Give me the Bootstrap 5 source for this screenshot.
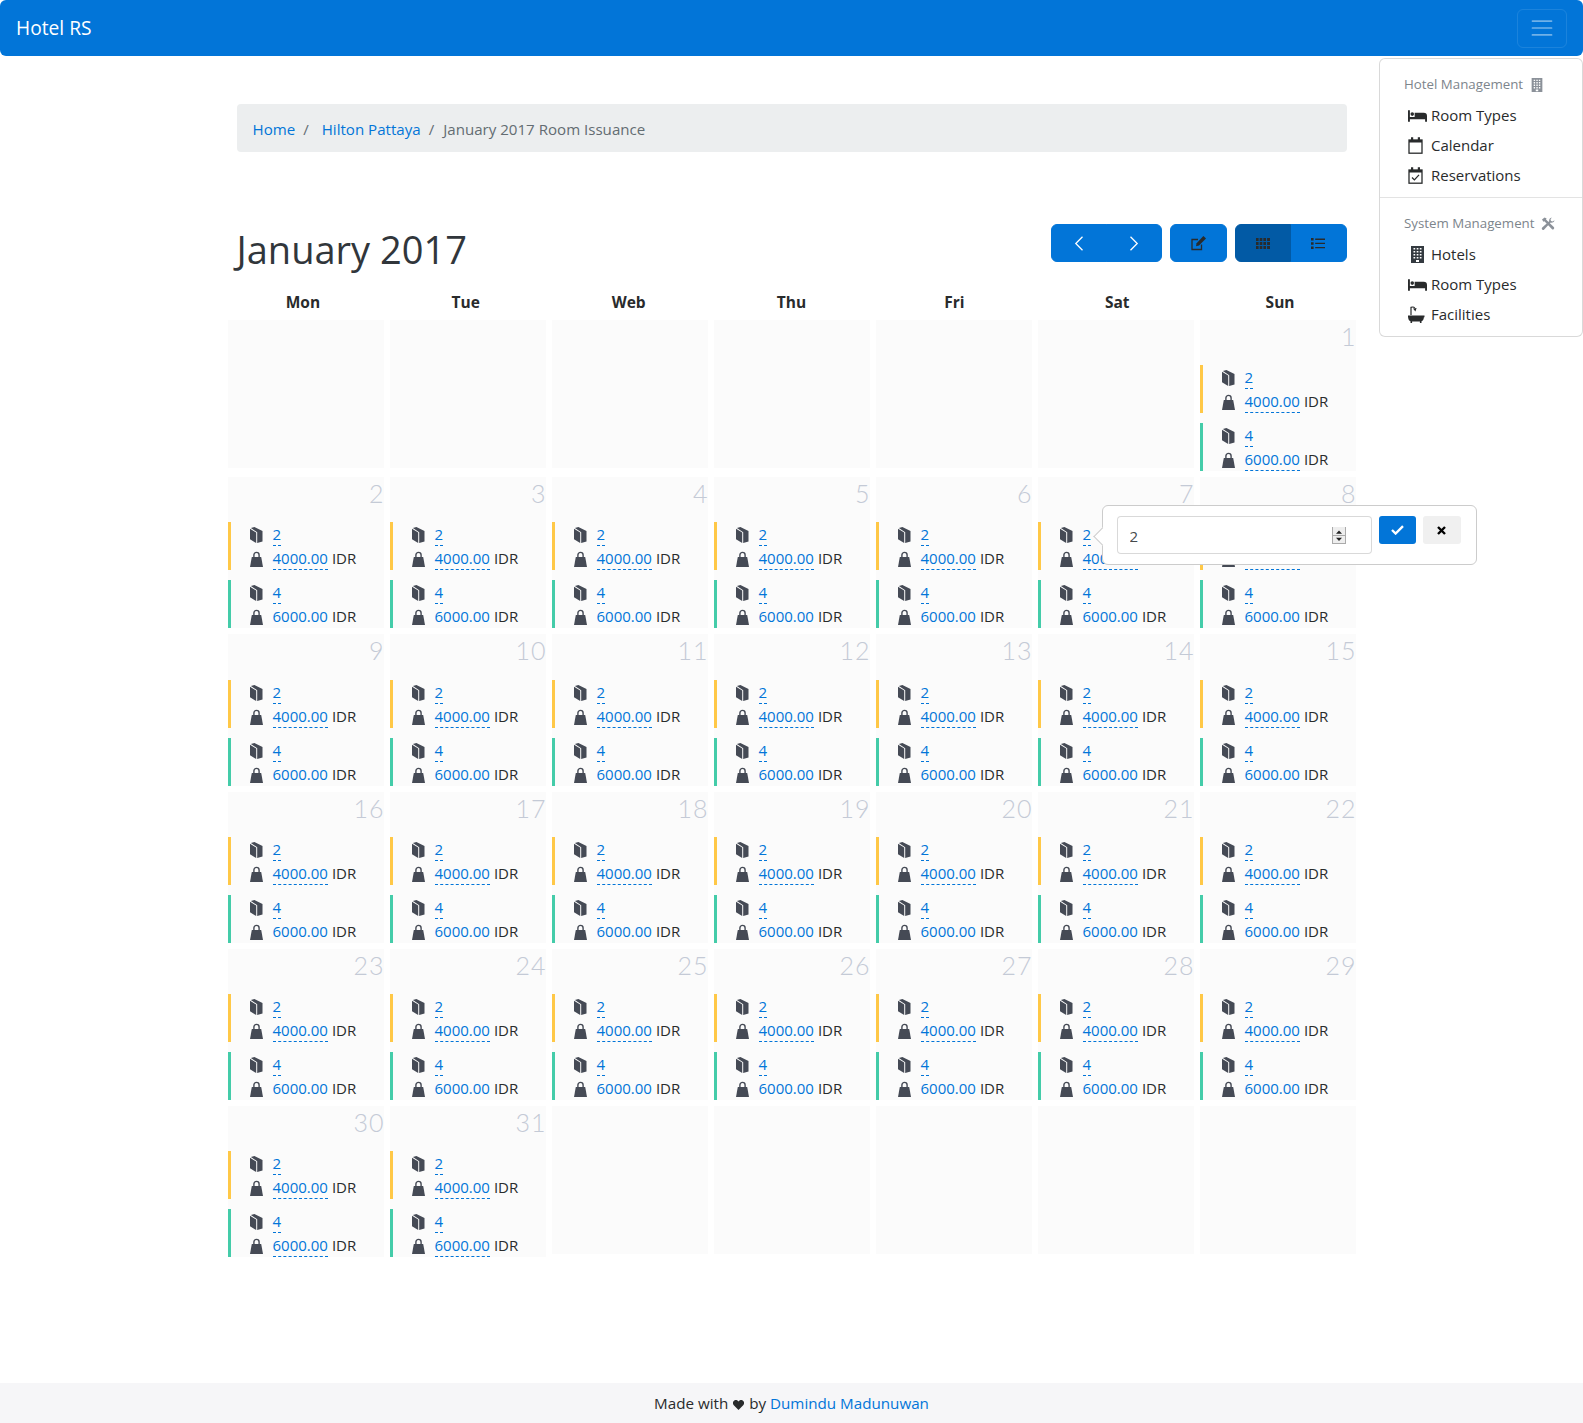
<!DOCTYPE html>
<html lang="en">
<head>
    <meta charset="UTF-8">
    <meta name="viewport" content="width=device-width, initial-scale=1.0">
    <title>Hotel RS</title>
    <link rel="stylesheet" href="https://cdn.jsdelivr.net/npm/bootstrap@5.3.0/dist/css/bootstrap.min.css">
    <style>
        body { font-family: "Open Sans", "Noto Sans", sans-serif; font-size: 15px; color: #292b2c; }
        a { color: #0275d8; text-decoration: none; }
        .top-bar { background: #0275d8; height: 56px; padding: 0 16px; }
        .top-bar .navbar-brand { font-size: 19.2px; margin: 0; padding: 0; color: #fff; }
        .top-bar .navbar-toggler { padding: 0 11px; border-color: rgba(255,255,255,.1); height: 39px; display: flex; align-items: center; }
        .top-bar .navbar-toggler:focus { box-shadow: none; }
        .top-bar .navbar-toggler-icon { width: 26px; height: 26px; opacity: .8; }
        .side-menu { left: auto; right: 0; top: 58px; width: 204px; padding: 8px 0 7px; font-size: 15px; --bs-dropdown-border-color: rgba(0,0,0,.15); }
        .side-menu .dropdown-header { height: 33px; padding: 2px 24px 0; font-size: 13.3px; color: #7d858c; display: flex; align-items: center; gap: 8px; }
        .side-menu .dropdown-header .tools-ico { margin-left: -2px; }
        .side-menu .dropdown-item { height: 30px; padding: 0 0 0 28px; display: flex; align-items: center; color: #292b2c; }
        .side-menu .dropdown-item svg { width: 19px; margin-right: 4px; flex: none; }
        .side-menu .dropdown-divider { margin: 7px 0 8px; border-color: #e3e3e3; opacity: 1; }
        .page-wrap { max-width: 1140px; padding: 0 15px; }
        .crumbs { background: #eceeef; height: 48px; margin: 48px 0 72px; padding: 3px 16px 0; border-radius: 4px; align-items: center; font-size: 15.1px; }
        .crumbs .breadcrumb-item + .breadcrumb-item { padding-left: 8px; }
        .crumbs .breadcrumb-item + .breadcrumb-item::before { color: #636c72; padding-right: 9px; }
        .crumbs .gap-before::before { padding-right: 13px !important; }
        .crumbs .active { color: #636c72; }
        .title-row { height: 38px; margin-bottom: 28px; }
        .title-row h1 { font-size: 38px; font-weight: 400; margin: 0; line-height: 50px; color: #31363b; }
        .title-row .btn-primary { --bs-btn-bg: #0275d8; --bs-btn-border-color: #0275d8; --bs-btn-active-bg: #025aa5; --bs-btn-active-border-color: #025aa5; --bs-btn-hover-bg: #0275d8; --bs-btn-hover-border-color: #0275d8; height: 38px; width: 56px; padding: 0; display: flex; align-items: center; justify-content: center; }
        .title-row .btn-edit { width: 57px; }
        .title-row .view-group .btn-primary { width: 56.5px; }
        .week-head { display: grid; grid-template-columns: repeat(7, 1fr); margin: 0 -15px 6px; height: 24px; font-size: 15.5px; font-weight: 700; line-height: 24px; text-align: center; }
        .cal-grid { display: grid; grid-template-columns: repeat(7, 1fr); grid-auto-rows: 151.2px; gap: 6px; margin: 0 -9px; }
        .day-box { background: #fbfbfb; position: relative; }
        .day-box.is-empty { height: 148px; }
        .day-no { height: 45.2px; padding: 3px 0 0 0; margin-right: -1px; text-align: right; font-family: Lato, sans-serif; font-weight: 300; font-size: 25px; line-height: 26px; letter-spacing: 1px; color: #c4cad6; }
        .slot { border-left: 3px solid #ffc847; height: 48px; margin-bottom: 10px; padding-left: 19px; }
        .slot.slot-alt { border-left-color: #44cca9; margin-bottom: 0; }
        .slot-line { display: flex; height: 24px; line-height: 25px; }
        .slot-line svg { flex: none; width: 13px; height: 16px; margin: 5px 10px 0 0; }
        .edit-link { display: inline-block; height: 24px; border-bottom: 1px dashed #0275d8; }
        .slot-line span.unit { margin-left: 4px; }
        .mid-week .slot-alt .slot-line:last-child .edit-link { border-bottom-color: transparent; }
        .qty-pop { position: absolute; left: 64px; top: 28px; width: 375px; height: 60px; background: #fff; border: 1px solid #ccc; border-radius: 6px; padding: 10px 14px; gap: 7px; z-index: 5; }
        .qty-pop::before { content: ""; position: absolute; left: -7px; top: 24px; width: 13px; height: 13px; background: #fff; border-left: 1px solid #ccc; border-bottom: 1px solid #ccc; transform: rotate(45deg); }
        .qty-field { position: relative; width: 255px; flex: none; }
        .qty-field .form-control { height: 38px; padding: 1px 12px 0; font-size: 15px; color: #464a4c; border-color: rgba(0,0,0,.15); border-radius: 4px; }
        .qty-field input::-webkit-inner-spin-button { -webkit-appearance: none; margin: 0; }
        .qty-field svg { position: absolute; right: 26px; top: 11px; }
        .qty-pop .btn { width: 37.5px; height: 28px; padding: 0; display: flex; align-items: center; justify-content: center; border: 0; border-radius: 3px; }
        .qty-ok { background: #0275d8; }
        .qty-no { background: #f0f0f0; }
        .foot-bar { background: #f6f6f8; height: 40px; line-height: 40px; text-align: center; font-size: 15.2px; }
        .foot-bar svg { margin: 0 1px; }
    </style>
</head>
<body class="d-flex flex-column min-vh-100">

    <svg width="0" height="0" class="position-absolute">
        <symbol id="i-book" viewBox="0 0 13 16"><path fill="#454a55" d="M0 1.8l6.2 3.8V16L0 12.2zM.9 1L4.4 0l8.1 3.9v10.6L7.2 16V5.2z"/></symbol>
        <symbol id="i-bag" viewBox="0 0 13 16"><path fill="#454a55" d="M1.8 6h9.4L13 16H0z"/><path fill="none" stroke="#454a55" stroke-width="1.4" d="M3.9 7V4a2.6 2.6 0 0 1 5.2 0v3"/></symbol>
        <symbol id="i-bed" viewBox="0 0 20 13"><path fill="#292b2c" d="M0 1h2v7h5V3.5h9.5A3.5 3.5 0 0 1 20 7v6h-2v-2.5H2V13H0z"/><circle cx="4.5" cy="5" r="1.9" fill="#292b2c"/></symbol>
        <symbol id="i-cal" viewBox="2 0 19 17"><rect x="3" y="3" width="13" height="13.2" fill="none" stroke="#292b2c" stroke-width="1.3"/><path fill="#292b2c" d="M3 3h13v2.4H3zM5 .3h2.2v3.4H5zM11.8.3H14v3.4h-2.2z"/></symbol>
        <symbol id="i-cal-ok" viewBox="2 0 19 17"><rect x="3" y="3" width="13" height="13.2" fill="none" stroke="#292b2c" stroke-width="1.3"/><path fill="#292b2c" d="M3 3h13v2.4H3zM5 .3h2.2v3.4H5zM11.8.3H14v3.4h-2.2z"/><path fill="none" stroke="#292b2c" stroke-width="1.3" d="M6 10.5l2.4 2.4 4.6-5"/></symbol>
        <symbol id="i-tower" viewBox="0 0 13 17"><path fill="currentColor" fill-rule="evenodd" d="M0 0h13v17H0zM2.5 2v1.6h1.7V2zm3.2 0v1.6h1.7V2zm3.1 0v1.6h1.7V2zM2.5 5v1.6h1.7V5zm3.2 0v1.6h1.7V5zm3.1 0v1.6h1.7V5zM2.5 8v1.6h1.7V8zm3.2 0v1.6h1.7V8zm3.1 0v1.6h1.7V8zM2.5 11v1.6h1.7V11zm3.2 0v1.6h1.7V11zm3.1 0v1.6h1.7V11zM5 14v2h3v-2z"/></symbol>
        <symbol id="i-tools" viewBox="0 0 14 14"><path fill="#8b9199" d="M1 2.4L3.6.4 5.6 1.6 5 2.6l7.8 7.4a1.4 1.4 0 0 1-2 2L3.4 4.2l-1 .6z"/><path fill="#8b9199" d="M13.5 3.2A3 3 0 0 1 9.7 5.6L3.2 12.6a1.4 1.4 0 0 1-2-2l7-6.3A3 3 0 0 1 10.8.6L9.5 2.4l.5 1.6 1.6.4z"/></symbol>
        <symbol id="i-bath" viewBox="1.5 0 19 17"><path fill="#292b2c" d="M1 9.4h17v1.8h-.6c-.2 2.2-1 3.5-2.4 4V17h-1.6v-1.4H5.6V17H4v-1.8c-1.4-.5-2.2-1.8-2.4-4H1z"/><path fill="none" stroke="#292b2c" stroke-width="1.2" d="M4.5 9V1.4c1.4-.6 3-.4 3.8.6"/><path fill="#292b2c" d="M6.5 2.6l3.6-.6-1.2 3.4z"/></symbol>
    </svg>

    <nav class="navbar navbar-dark top-bar rounded">
        <a class="navbar-brand" href="#">Hotel RS</a>
        <button class="navbar-toggler" type="button" aria-label="Toggle navigation"><span class="navbar-toggler-icon"></span></button>
        <div class="dropdown-menu show side-menu">
            <div class="dropdown-header">Hotel Management <svg width="12" height="14" color="#8b9199"><use href="#i-tower"/></svg></div>
            <a class="dropdown-item" href="#"><svg height="13"><use href="#i-bed"/></svg>Room Types</a>
            <a class="dropdown-item" href="#"><svg height="17"><use href="#i-cal"/></svg>Calendar</a>
            <a class="dropdown-item" href="#"><svg height="17"><use href="#i-cal-ok"/></svg>Reservations</a>
            <div class="dropdown-divider"></div>
            <div class="dropdown-header">System Management <svg width="14" height="14" class="tools-ico"><use href="#i-tools"/></svg></div>
            <a class="dropdown-item" href="#"><svg height="17" color="#343a40"><use href="#i-tower"/></svg>Hotels</a>
            <a class="dropdown-item" href="#"><svg height="13"><use href="#i-bed"/></svg>Room Types</a>
            <a class="dropdown-item" href="#"><svg height="17"><use href="#i-bath"/></svg>Facilities</a>
        </div>
    </nav>

    <main class="container page-wrap">
        <ol class="breadcrumb crumbs">
            <li class="breadcrumb-item"><a href="#">Home</a></li>
            <li class="breadcrumb-item gap-before"><a href="#">Hilton Pattaya</a></li>
            <li class="breadcrumb-item active">January 2017 Room Issuance</li>
        </ol>

        <div class="d-flex justify-content-between title-row">
            <h1>January 2017</h1>
            <div class="d-flex gap-2">
                <div class="btn-group">
                    <button class="btn btn-primary" aria-label="Previous"><svg width="10" height="15" viewBox="0 0 10 15"><path fill="none" stroke="#fff" stroke-width="1.3" d="M8.5 .8L1.8 7.5l6.7 6.7"/></svg></button>
                    <button class="btn btn-primary" aria-label="Next"><svg width="10" height="15" viewBox="0 0 10 15"><path fill="none" stroke="#fff" stroke-width="1.3" d="M1.5 .8l6.7 6.7-6.7 6.7"/></svg></button>
                </div>
                <button class="btn btn-primary btn-edit" aria-label="Edit"><svg width="15" height="15" viewBox="0 0 15 15"><path fill="none" stroke="#292b2c" stroke-width="1.3" d="M10.5 8.5v5H1v-10h6"/><path fill="#292b2c" d="M12.4 0L15 2.4 8 9.6l-3 .6.6-3z"/></svg></button>
                <div class="btn-group view-group">
                    <button class="btn btn-primary active" aria-label="Month view"><svg width="14" height="11" viewBox="0 0 14 11"><path fill="#292b2c" d="M0 0h2.6v3H0zM3.7 0h2.6v3H3.7zM7.4 0H10v3H7.4zM11.1 0H14v3h-2.9zM0 4h2.6v3H0zM3.7 4h2.6v3H3.7zM7.4 4H10v3H7.4zM11.1 4H14v3h-2.9zM0 8h2.6v3H0zM3.7 8h2.6v3H3.7zM7.4 8H10v3H7.4zM11.1 8H14v3h-2.9z"/></svg></button>
                    <button class="btn btn-primary" aria-label="List view"><svg width="14" height="11" viewBox="0 0 14 11"><path fill="#292b2c" d="M0 0h2.6v2.6H0zM0 4.2h2.6v2.6H0zM0 8.4h2.6V11H0zM4.2 .6H14v1.3H4.2zM4.2 4.8H14v1.3H4.2zM4.2 9H14v1.3H4.2z"/></svg></button>
                </div>
            </div>
        </div>

        <div class="week-head">
            <div>Mon</div><div>Tue</div><div>Web</div><div>Thu</div><div>Fri</div><div>Sat</div><div>Sun</div>
        </div>
        <div id="calGrid" class="cal-grid"></div>
    </main>

    <footer class="foot-bar mt-auto">Made with <svg width="11" height="10" viewBox="0 0 11 10"><path fill="#292b2c" d="M5.5 10L.8 5.2A2.9 2.9 0 0 1 5 1l.5.6L6 1a2.9 2.9 0 0 1 4.2 4.2z"/></svg> by <a href="#">Dumindu Madunuwan</a></footer>

<script src="https://cdn.jsdelivr.net/npm/bootstrap@5.3.0/dist/js/bootstrap.bundle.min.js"></script>
<script>
    document.addEventListener("DOMContentLoaded", function () {
        const grid = document.getElementById("calGrid");

        function slot(qty, price, alt) {
            return `<div class="slot ${alt ? "slot-alt" : ""}">
                <div class="slot-line"><svg><use href="#i-book"/></svg><a class="edit-link" href="#">${qty}</a></div>
                <div class="slot-line"><svg><use href="#i-bag"/></svg><a class="edit-link" href="#">${price}</a><span class="unit">IDR</span></div>
            </div>`;
        }

        const popover = `<div class="qty-pop d-flex">
            <div class="qty-field">
                <input type="number" class="form-control" value="2">
                <svg width="14" height="17" viewBox="0 0 14 17"><path fill="#eee" d="M0 0h14v17H0z"/><path fill="none" stroke="#aaa" d="M.5 0v17M13.5 0v17M0 8.5h14M0 16.5h14"/><path fill="#222" d="M7 3.5l3 3.2H4zM7 14l3-3.2H4z"/></svg>
            </div>
            <button class="btn qty-ok" aria-label="Save"><svg width="13" height="10" viewBox="0 0 13 10"><path fill="none" stroke="#fff" stroke-width="2.4" d="M1 5l3.6 3.5L12 1.2"/></svg></button>
            <button class="btn qty-no" aria-label="Cancel"><svg width="9" height="9" viewBox="0 0 9 9"><path fill="none" stroke="#000" stroke-width="2.4" d="M1 1l7 7M8 1L1 8"/></svg></button>
        </div>`;

        // Jan 2017 starts on a Sunday, so six empty boxes first
        let html = "";
        for (let i = 0; i < 6; i++) html += `<div class="day-box is-empty"></div>`;
        for (let d = 1; d <= 31; d++) {
            const mid = d >= 2 && d <= 29 ? "mid-week" : "";
            html += `<div class="day-box ${mid}"><div class="day-no">${d}</div>${slot(2, "4000.00")}${slot(4, "6000.00", true)}${d === 7 ? popover : ""}</div>`;
        }
        for (let i = 0; i < 5; i++) html += `<div class="day-box is-empty"></div>`;
        grid.innerHTML = html;
    });
</script>
</body>
</html>
